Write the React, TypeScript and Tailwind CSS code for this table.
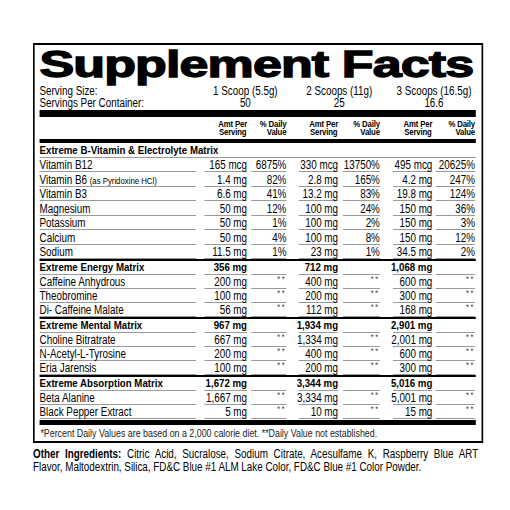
import React from "react";

// Narrow typeface isn't installed, so the label is laid out wide and squeezed horizontally (like Arial Narrow)
const SANS = "font-['Liberation_Sans',Arial,sans-serif]";

// column slots (layout px, before the 0.82 squeeze): name, amt1, dv1, amt2, dv2, amt3, dv3
const COLS = [
  "w-[191px]",
  "ml-[10px] w-[52px]",
  "ml-[5px] w-[43px]",
  "ml-[15px] w-[48px]",
  "ml-[6px] w-[45px]",
  "ml-[16px] w-[48px]",
  "ml-[4px] w-[48px]",
];

type Section = {
  title: string;
  totals?: string[];
  rows: { name: React.ReactNode; v: string[] }[];
};

const sections: Section[] = [
  {
    title: "Extreme B-Vitamin & Electrolyte Matrix",
    rows: [
      { name: "Vitamin B12", v: ["165 mcg", "6875%", "330 mcg", "13750%", "495 mcg", "20625%"] },
      {
        name: (
          <>
            Vitamin B6 <span className="text-[9.5px]">(as Pyridoxine HCl)</span>
          </>
        ),
        v: ["1.4 mg", "82%", "2.8 mg", "165%", "4.2 mg", "247%"],
      },
      { name: "Vitamin B3", v: ["6.6 mg", "41%", "13.2 mg", "83%", "19.8 mg", "124%"] },
      { name: "Magnesium", v: ["50 mg", "12%", "100 mg", "24%", "150 mg", "36%"] },
      { name: "Potassium", v: ["50 mg", "1%", "100 mg", "2%", "150 mg", "3%"] },
      { name: "Calcium", v: ["50 mg", "4%", "100 mg", "8%", "150 mg", "12%"] },
      { name: "Sodium", v: ["11.5 mg", "1%", "23 mg", "1%", "34.5 mg", "2%"] },
    ],
  },
  {
    title: "Extreme Energy Matrix",
    totals: ["356 mg", "712 mg", "1,068 mg"],
    rows: [
      { name: "Caffeine Anhydrous", v: ["200 mg", "**", "400 mg", "**", "600 mg", "**"] },
      { name: "Theobromine", v: ["100 mg", "**", "200 mg", "**", "300 mg", "**"] },
      { name: "Di- Caffeine Malate", v: ["56 mg", "**", "112 mg", "**", "168 mg", "**"] },
    ],
  },
  {
    title: "Extreme Mental Matrix",
    totals: ["967 mg", "1,934 mg", "2,901 mg"],
    rows: [
      { name: "Choline Bitratrate", v: ["667 mg", "**", "1,334 mg", "**", "2,001 mg", "**"] },
      { name: "N-Acetyl-L-Tyrosine", v: ["200 mg", "**", "400 mg", "**", "600 mg", "**"] },
      { name: "Eria Jarensis", v: ["100 mg", "**", "200 mg", "**", "300 mg", "**"] },
    ],
  },
  {
    title: "Extreme Absorption Matrix",
    totals: ["1,672 mg", "3,344 mg", "5,016 mg"],
    rows: [
      { name: "Beta Alanine", v: ["1,667 mg", "**", "3,334 mg", "**", "5,001 mg", "**"] },
      { name: "Black Pepper Extract", v: ["5 mg", "**", "10 mg", "**", "15 mg", "**"] },
    ],
  },
];

function Line({ cells, h, bold }: { cells: React.ReactNode[]; h: string; bold?: boolean }) {
  return (
    <div className={`flex ${h} ${bold ? "text-[11.8px] font-bold" : ""}`}>
      {cells.map((c, i) => (
        <div
          key={i}
          className={`${COLS[i]} flex h-full items-end border-b border-[#9a9a9a] leading-none whitespace-nowrap ${
            i === 0 ? "justify-start" : "justify-end"
          }`}
        >
          {c === "**" ? (
            <span className="mb-[4px] text-[9px] tracking-[2px] text-[#444]">**</span>
          ) : (
            <span>{c}</span>
          )}
        </div>
      ))}
    </div>
  );
}

function ColHead() {
  const amt = (
    <div className="text-center">
      Amt Per
      <br />
      Serving
    </div>
  );
  const dv = (
    <div className="text-right">
      % Daily
      <br />
      Value
    </div>
  );
  return (
    <div className="flex h-[22px] text-[9.5px] leading-[8.7px] font-bold tracking-[-0.2px]">
      {[null, amt, dv, amt, dv, amt, dv].map((c, i) => (
        <div key={i} className={`${COLS[i]} flex items-end justify-end pb-[2px]`}>
          {c}
        </div>
      ))}
    </div>
  );
}

export default function App() {
  return (
    <div className={`h-[510px] w-[510px] overflow-hidden bg-white pt-[43px] pl-[33px] text-black ${SANS}`}>
      <div className="w-[549px] origin-top-left scale-x-[0.82]">
        <div className="border-y-2 border-x-[2.5px] border-black pl-[6px] pr-[7px]">
          <div className="mt-[2px] h-[36px] whitespace-nowrap">
            <div className="inline-block origin-left scale-x-[1.76] text-[36px] leading-none font-bold tracking-[-0.6px] [-webkit-text-stroke:1.3px_black]">
              Supplement Facts
            </div>
          </div>

          <div className="mt-[3px] text-[12px] leading-[11.5px]">
            <div className="flex">
              <div className="w-[191px]">Serving Size:</div>
              <div className="ml-[10px] w-[100px] text-center">1 Scoop (5.5g)</div>
              <div className="ml-[15px] w-[99px] text-center">2 Scoops (11g)</div>
              <div className="ml-[16px] w-[100px] text-center">3 Scoops (16.5g)</div>
            </div>
            <div className="flex">
              <div className="w-[191px]">Servings Per Container:</div>
              <div className="ml-[10px] w-[100px] text-center">50</div>
              <div className="ml-[15px] w-[99px] text-center">25</div>
              <div className="ml-[16px] w-[100px] text-center">16.6</div>
            </div>
          </div>
          <div className="mt-[1px] h-[7px] bg-black" />

          <ColHead />
          <div className="h-[4px] bg-black" />

          <div className="text-[12px]">
            {sections.map((s, si) => {
              const h = si === 0 ? "h-[14.5px]" : "h-[14px]";
              return (
                <div key={si}>
                  {si > 0 && <div className="h-[2px] bg-black" />}
                  {s.totals ? (
                    <Line h={h} bold cells={[s.title, s.totals[0], "", s.totals[1], "", s.totals[2], ""]} />
                  ) : (
                    <div className={`${h} flex items-end border-b border-[#9a9a9a] text-[11.8px] leading-none font-bold`}>
                      {s.title}
                    </div>
                  )}
                  {s.rows.map((r, ri) => (
                    <Line key={ri} h={h} cells={[r.name, ...r.v]} />
                  ))}
                </div>
              );
            })}
          </div>

          <div className="mt-[1px] h-[5px] bg-black" />
          <div className="flex h-[16px] items-center pl-[1px] text-[10.8px] leading-none text-[#222]">
            *Percent Daily Values are based on a 2,000 calorie diet. **Daily Value not established.
          </div>
        </div>

        <div className="mt-[5px] w-[543px] text-[12px] leading-[12.5px]">
          <div className="text-justify [text-align-last:justify]">
            <span className="font-bold">Other Ingredients:</span> Citric Acid, Sucralose, Sodium Citrate, Acesulfame K,
            Raspberry Blue ART
          </div>
          <div>Flavor, Maltodextrin, Silica, FD&amp;C Blue #1 ALM Lake Color, FD&amp;C Blue #1 Color Powder.</div>
        </div>
      </div>
    </div>
  );
}
